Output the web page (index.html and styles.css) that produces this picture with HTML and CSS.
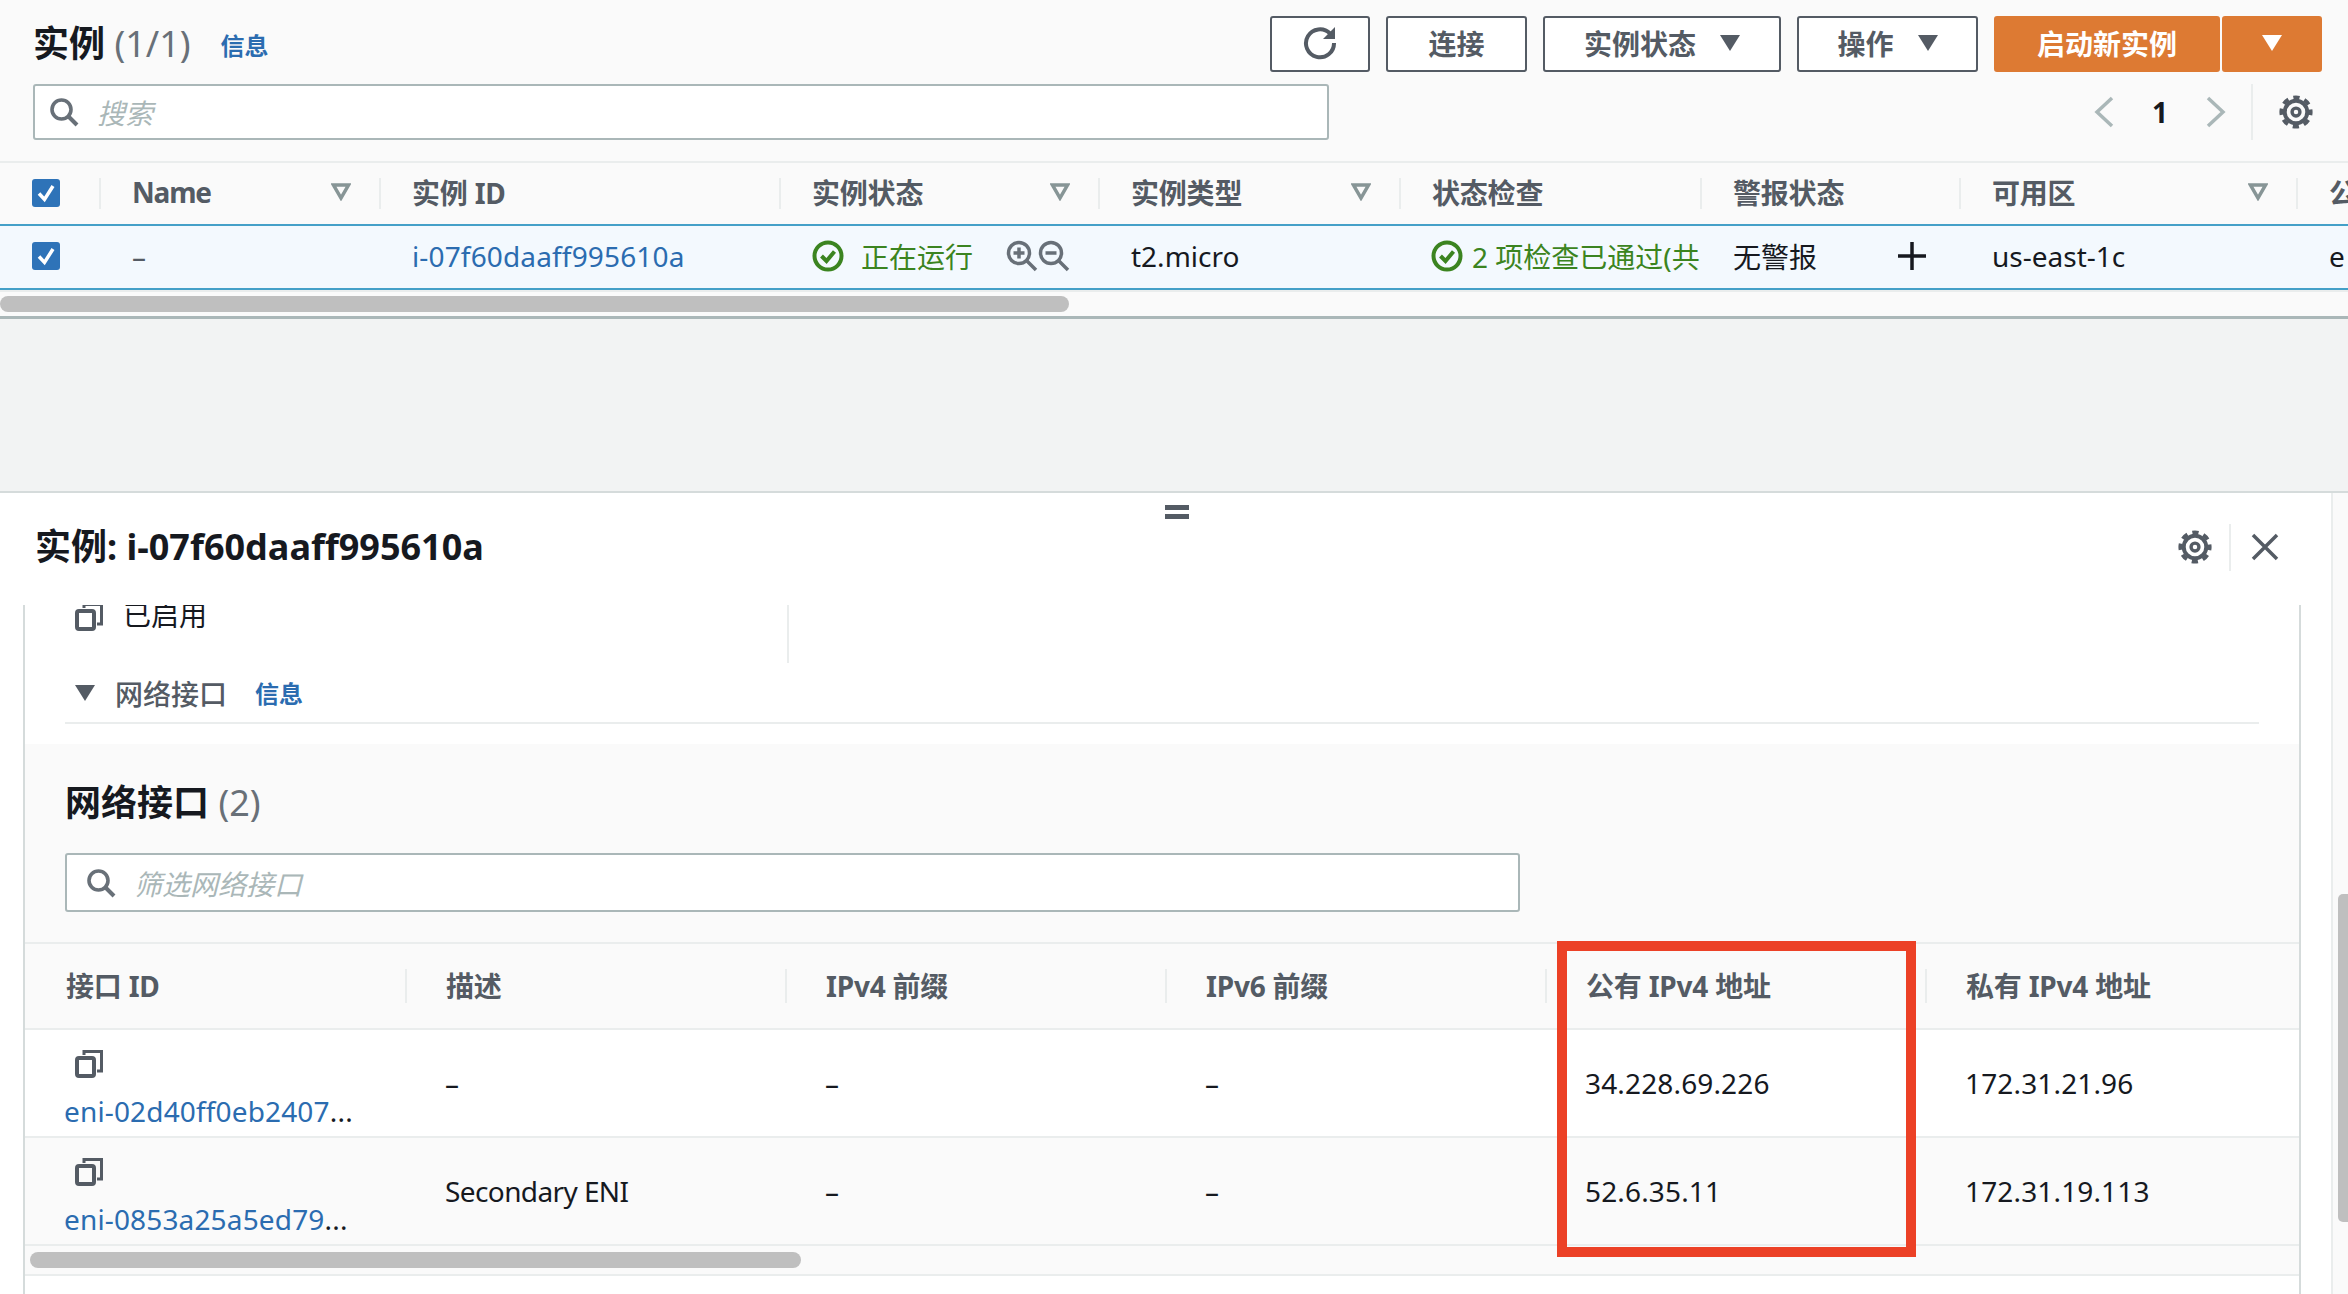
FILE: index.html
```html
<!DOCTYPE html>
<html lang="zh-CN">
<head>
  <meta charset="UTF-8">
  <title>实例</title>
  <link rel="stylesheet" href="styles.css">
</head>
<body>
  <svg class="defs" width="0" height="0">
    <symbol id="gear" viewBox="0 0 32 32">
      <circle cx="16" cy="16" r="10" fill="none" stroke="currentColor" stroke-width="3.5"/>
      <circle cx="16" cy="16" r="13" fill="none" stroke="currentColor" stroke-width="3.5" stroke-dasharray="5.6 4.61" stroke-dashoffset="2.8"/>
      <circle cx="16" cy="16" r="3.5" fill="none" stroke="currentColor" stroke-width="3"/>
    </symbol>
    <symbol id="search" viewBox="0 0 30 30">
      <circle cx="12.5" cy="12.5" r="9.5" fill="none" stroke="currentColor" stroke-width="3.6"/>
      <path d="M19.5 19.5L28 28" fill="none" stroke="currentColor" stroke-width="4"/>
    </symbol>
    <symbol id="copy" viewBox="0 0 28 28">
      <path d="M9 5V1.500h17.500V21H22" fill="none" stroke="currentColor" stroke-width="3"/>
      <rect x="2" y="8" width="17" height="18" rx="2" fill="none" stroke="currentColor" stroke-width="4"/>
    </symbol>
    <symbol id="filter" viewBox="0 0 20 18">
      <path d="M2.500 2h15L10 15z" fill="none" stroke="currentColor" stroke-width="3.500"/>
    </symbol>
    <symbol id="ok" viewBox="0 0 32 32">
      <circle cx="16" cy="16" r="13.500" fill="none" stroke="currentColor" stroke-width="4"/>
      <path d="M9.500 16l5 5 8-9.500" fill="none" stroke="currentColor" stroke-width="4"/>
    </symbol>
    <symbol id="tick" viewBox="0 0 28 28">
      <rect width="28" height="28" rx="3" fill="#2e73b8"/>
      <path d="M7 14.500l5.500 6L21 7" fill="none" stroke="#fff" stroke-width="3.500"/>
    </symbol>
  </svg>

  <section class="top">
    <div class="bar">
      <h1>实例 <span class="count">(1/1)</span></h1>
      <a class="info">信息</a>
      <div class="actions">
        <button class="btn btn-icon">
          <svg width="34" height="34" viewBox="0 0 34 34"><path d="M27 7.500A14 14 0 1 0 31 17" fill="none" stroke="currentColor" stroke-width="4"/><path d="M32 1v12H20z" fill="currentColor"/></svg>
        </button>
        <button class="btn btn-connect">连接</button>
        <button class="btn btn-state">实例状态 <i class="caret"></i></button>
        <button class="btn btn-ops">操作 <i class="caret"></i></button>
        <button class="btn btn-primary btn-launch">启动新实例</button>
        <button class="btn btn-primary btn-more"><i class="caret"></i></button>
      </div>
    </div>

    <div class="bar-search">
      <div class="search search-main">
        <svg class="search-icon" width="30" height="30"><use href="#search"/></svg>
        <span class="placeholder">搜索</span>
      </div>
      <div class="pager">
        <svg width="24" height="32" viewBox="0 0 24 32"><path d="M20 2L5 16l15 14" fill="none" stroke="#aab7b8" stroke-width="3.500"/></svg>
        <b>1</b>
        <svg width="24" height="32" viewBox="0 0 24 32"><path d="M4 2l15 14L4 30" fill="none" stroke="#aab7b8" stroke-width="3.500"/></svg>
        <span class="pager-gear"><svg width="36" height="36"><use href="#gear"/></svg></span>
      </div>
    </div>

    <div class="grid grid-main head">
      <div class="cell cell-check"><svg width="28" height="28"><use href="#tick"/></svg></div>
      <div class="cell name-head">Name<svg class="filter" width="20" height="18"><use href="#filter"/></svg></div>
      <div class="cell">实例 ID</div>
      <div class="cell">实例状态<svg class="filter" width="20" height="18"><use href="#filter"/></svg></div>
      <div class="cell">实例类型<svg class="filter" width="20" height="18"><use href="#filter"/></svg></div>
      <div class="cell">状态检查</div>
      <div class="cell">警报状态</div>
      <div class="cell">可用区<svg class="filter" width="20" height="18"><use href="#filter"/></svg></div>
      <div class="cell">公</div>
    </div>
    <div class="grid grid-main row-selected">
      <div class="cell cell-check"><svg width="28" height="28"><use href="#tick"/></svg></div>
      <div class="cell muted">–</div>
      <div class="cell"><a class="num">i-07f60daaff995610a</a></div>
      <div class="cell green">
        <svg class="ok" width="32" height="32"><use href="#ok"/></svg>
        <span class="run-text">正在运行</span>
        <svg class="zoom-icon" width="32" height="32" viewBox="0 0 32 32"><circle cx="13" cy="13" r="10.500" fill="none" stroke="#687078" stroke-width="3.500"/><path d="M21 21l9 9M7.500 13h11M13 7.500v11" fill="none" stroke="#687078" stroke-width="3.500"/></svg>
        <svg class="zoom-icon" width="32" height="32" viewBox="0 0 32 32"><circle cx="13" cy="13" r="10.500" fill="none" stroke="#687078" stroke-width="3.500"/><path d="M21 21l9 9M7.500 13h11" fill="none" stroke="#687078" stroke-width="3.500"/></svg>
      </div>
      <div class="cell">t2.micro</div>
      <div class="cell cell-status green">
        <svg class="ok-small" width="32" height="32"><use href="#ok"/></svg>
        <span>2 项检查已通过(共</span>
      </div>
      <div class="cell">无警报
        <svg class="plus" width="30" height="30" viewBox="0 0 30 30"><path d="M15 1v28M1 15h28" fill="none" stroke="#16191f" stroke-width="3.500"/></svg>
      </div>
      <div class="cell">us-east-1c</div>
      <div class="cell">e</div>
    </div>
    <div class="hscroll hscroll-top"><div class="thumb"></div></div>
  </section>

  <div class="gap"></div>

  <section class="panel">
    <div class="handle"></div>
    <div class="panel-main">
      <div class="panel-head">
        <h2>实例: i-07f60daaff995610a</h2>
        <div class="panel-tools">
          <svg width="36" height="36"><use href="#gear"/></svg>
          <span class="tool-line"></span>
          <svg width="28" height="28" viewBox="0 0 28 28"><path d="M2 2l24 24M26 2L2 26" fill="none" stroke="currentColor" stroke-width="3.500"/></svg>
        </div>
      </div>

      <div class="box">
        <div class="enabled">
          <div class="enabled-cell"><svg class="copy" width="28" height="28"><use href="#copy"/></svg><span>已启用</span></div>
        </div>
        <div class="sub-head">
          <i class="caret"></i>
          <span class="sub-title">网络接口</span>
          <a class="info">信息</a>
        </div>

        <div class="eni">
          <h3>网络接口 <span class="count">(2)</span></h3>
          <div class="search search-eni">
            <svg class="search-icon" width="30" height="30"><use href="#search"/></svg>
            <span class="placeholder">筛选网络接口</span>
          </div>

          <div class="grid grid-eni head">
            <div class="cell">接口 ID</div>
            <div class="cell">描述</div>
            <div class="cell">IPv4 前缀</div>
            <div class="cell">IPv6 前缀</div>
            <div class="cell">公有 IPv4 地址</div>
            <div class="cell">私有 IPv4 地址</div>
          </div>
          <div class="grid grid-eni row row-white">
            <div class="cell cell-eni"><svg class="copy" width="28" height="28"><use href="#copy"/></svg><div><a class="num">eni-02d40ff0eb2407</a>...</div></div>
            <div class="cell">–</div>
            <div class="cell">–</div>
            <div class="cell">–</div>
            <div class="cell num">34.228.69.226</div>
            <div class="cell num">172.31.21.96</div>
          </div>
          <div class="grid grid-eni row">
            <div class="cell cell-eni"><svg class="copy" width="28" height="28"><use href="#copy"/></svg><div><a class="num">eni-0853a25a5ed79</a>...</div></div>
            <div class="cell tight">Secondary ENI</div>
            <div class="cell">–</div>
            <div class="cell">–</div>
            <div class="cell num">52.6.35.11</div>
            <div class="cell num">172.31.19.113</div>
          </div>
          <div class="hscroll hscroll-eni"><div class="thumb"></div></div>
        </div>
        <div class="mark"></div>
      </div>
    </div>
    <div class="vscroll"><div class="vthumb"></div></div>
  </section>
</body>
</html>
```

FILE: styles.css
```css
:root {
  --text: #16191f;
  --grey: #545b64;
  --line: #eaeded;
  --link: #2b6cb0;
  --green: #3b8420;
  --thumb: #bfbfbf;
}

* {
  box-sizing: border-box;
}

html, body {
  margin: 0;
  height: 1294px;
  overflow: hidden;
}

body {
  font-family: "Noto Sans", "Noto Sans CJK SC", sans-serif;
  font-size: 28px;
  color: var(--text);
  background: #fff;
}

.defs {
  position: absolute;
}

a {
  color: var(--link);
}

h1, h2, h3 {
  margin: 0;
  font-size: 36px;
  font-weight: 700;
  line-height: 1;
}

.count {
  font-weight: 400;
  color: #687078;
}

.info {
  font-size: 24px;
  font-weight: 700;
}

.num {
  letter-spacing: 0.15px;
}

.tight {
  letter-spacing: -0.6px;
}

/* top table */
.top {
  height: 319px;
  background: #fafafa;
  border-bottom: 3px solid #aab7b8;
}

.bar {
  display: flex;
  align-items: center;
  height: 56px;
  padding: 16px 26px 0 33px;
  box-sizing: content-box;
}

.bar h1 {
  margin-right: 30px;
}

.actions {
  display: flex;
  gap: 16px;
  margin-left: auto;
}

.btn {
  display: flex;
  align-items: center;
  justify-content: center;
  gap: 24px;
  height: 56px;
  padding: 0 0 2px;
  font: 700 28px "Noto Sans", "Noto Sans CJK SC", sans-serif;
  color: var(--grey);
  background: #fff;
  border: 2px solid var(--grey);
  border-radius: 3px;
}

.btn-icon { width: 100px; }
.btn-connect { width: 141px; }
.btn-state { width: 238px; }
.btn-ops { width: 181px; }

.btn-primary {
  color: #fff;
  background: #dd7a33;
  border-color: #dd7a33;
}

.btn-launch { width: 226px; }
.btn-more {
  width: 100px;
  margin-left: -14px;
}

.caret {
  width: 0;
  height: 0;
  border-left: 10px solid transparent;
  border-right: 10px solid transparent;
  border-top: 16px solid currentColor;
}

.bar-search {
  display: flex;
  align-items: center;
  height: 56px;
  margin-top: 12px;
  padding-left: 33px;
}

.search {
  display: flex;
  align-items: center;
  background: #fff;
  border: 2px solid #aab7b8;
  border-radius: 3px;
}

.search-main {
  width: 1296px;
  height: 56px;
  padding-left: 14px;
}

.search-icon {
  color: #687078;
}

.placeholder {
  margin-left: 18px;
  font-style: italic;
  color: #aab7b8;
}

.pager {
  display: flex;
  align-items: center;
  margin-left: auto;
  height: 56px;
  padding-right: 34px;
}

.pager b {
  width: 88px;
  text-align: center;
  font-size: 28px;
}

.pager-gear {
  display: flex;
  align-items: center;
  height: 56px;
  margin-left: 23px;
  padding-left: 25px;
  border-left: 2px solid var(--line);
  color: var(--grey);
}

/* shared table bits */
.grid {
  display: grid;
  overflow: hidden;
}

.grid-main {
  grid-template-columns: 99px 280px 400px 319px 301px 301px 259px 337px 200px;
}

.grid-eni {
  grid-template-columns: 380px 380px 380px 380px 380px 374px;
}

.cell {
  display: flex;
  align-items: center;
  position: relative;
  padding-left: 33px;
  white-space: nowrap;
  overflow: hidden;
}

.head {
  height: 63px;
  font-weight: 700;
  color: var(--grey);
  border-top: 2px solid var(--line);
}

.head .cell {
  padding-bottom: 3px;
  letter-spacing: -0.2px;
}

.head .name-head {
  letter-spacing: -1.2px;
}

.head .cell + .cell::before {
  content: "";
  position: absolute;
  left: 0;
  top: 15px;
  bottom: 15px;
  width: 2px;
  background: var(--line);
}

.grid-main.head {
  margin-top: 21px;
}

.filter {
  position: absolute;
  right: 28px;
  color: #879596;
}

.cell-check {
  padding-left: 32px;
}

.head .cell-check {
  padding-bottom: 2px;
}

.row-selected {
  height: 66px;
  padding-bottom: 2px;
  background: #f3f9fe;
  border-top: 2px solid #44a0c8;
  border-bottom: 2px solid #44a0c8;
}

.muted {
  color: var(--grey);
}

.green {
  color: var(--green);
}

.ok {
  margin-right: 17px;
  flex: none;
}

.run-text {
  margin-right: 33px;
}

.cell-status {
  padding-left: 32px;
}

.ok-small {
  margin-right: 9px;
  flex: none;
}

.plus {
  position: absolute;
  left: 197px;
}

.hscroll {
  display: flex;
  align-items: center;
}

.thumb {
  height: 16px;
  background: var(--thumb);
  border-radius: 8px;
}

.hscroll-top {
  height: 25px;
  border-top: 2px solid var(--line);
}

.hscroll-top .thumb {
  width: 1069px;
}

.gap {
  height: 172px;
  background: #f2f3f3;
}

/* bottom panel */
.panel {
  position: relative;
  display: flex;
  height: 803px;
  border-top: 2px solid #d5dbdb;
}

.handle {
  position: absolute;
  left: 1165px;
  top: 12px;
  width: 24px;
  height: 14px;
  border-top: 5px solid var(--grey);
  border-bottom: 5px solid var(--grey);
}

.panel-main {
  flex: 1;
  min-width: 0;
}

.panel-head {
  display: flex;
  align-items: center;
  justify-content: space-between;
  height: 112px;
  padding: 0 52px 4px 35px;
}

.panel-tools {
  display: flex;
  align-items: center;
  color: var(--grey);
}

.tool-line {
  width: 2px;
  height: 47px;
  margin: 0 20px 0 16px;
  background: var(--line);
}

.box {
  position: relative;
  width: 2278px;
  height: 689px;
  margin-left: 23px;
  border-left: 2px solid #d5dbdb;
  border-right: 2px solid #d5dbdb;
}

.enabled {
  height: 58px;
  overflow: hidden;
}

.enabled-cell {
  display: flex;
  width: 764px;
  height: 60px;
  margin-top: -2px;
  padding: 0 0 0 50px;
  border-right: 2px solid var(--line);
  line-height: 24px;
  gap: 20px;
}

.copy {
  flex: none;
  color: var(--grey);
}

.sub-head {
  display: flex;
  align-items: center;
  height: 61px;
  margin: 0 40px;
  padding: 0 0 0 10px;
  border-bottom: 2px solid var(--line);
}

.sub-head .caret {
  color: var(--grey);
}

.sub-title {
  margin: 0 28px 0 20px;
  font-weight: 500;
  color: var(--grey);
}

.eni {
  height: 532px;
  margin-top: 20px;
  background: #fafafa;
}

.eni h3 {
  padding: 41px 0 0 40px;
  height: 109px;
}

.search-eni {
  width: 1455px;
  height: 59px;
  margin-left: 40px;
  padding-left: 19px;
}

.grid-eni.head {
  height: 88px;
  margin-top: 30px;
  border-bottom: 2px solid var(--line);
}

.grid-eni .cell {
  padding-left: 40px;
}

.grid-eni.head .cell {
  padding-left: 41px;
}

.grid-eni.head .cell::before {
  top: 25px;
  bottom: 25px;
}

.row {
  height: 108px;
  border-bottom: 2px solid var(--line);
}

.row-white {
  background: #fff;
}

.cell-eni {
  display: block;
  padding: 20px 0 0 39px !important;
  letter-spacing: 0.3px;
}

.cell-eni .copy {
  display: block;
  margin: 0 0 14px 11px;
}

.hscroll-eni {
  height: 30px;
  padding-left: 5px;
  border-bottom: 2px solid var(--line);
}

.hscroll-eni .thumb {
  width: 771px;
}

.mark {
  position: absolute;
  left: 1532px;
  top: 336px;
  width: 359px;
  height: 316px;
  border: 10px solid #ec4126;
}

.vscroll {
  width: 17px;
  flex: none;
  background: #fafafa;
  border-left: 2px solid var(--line);
}

.vthumb {
  width: 10px;
  height: 328px;
  margin: 401px 0 0 5px;
  background: var(--thumb);
  border-radius: 5px 0 0 5px;
}
```
